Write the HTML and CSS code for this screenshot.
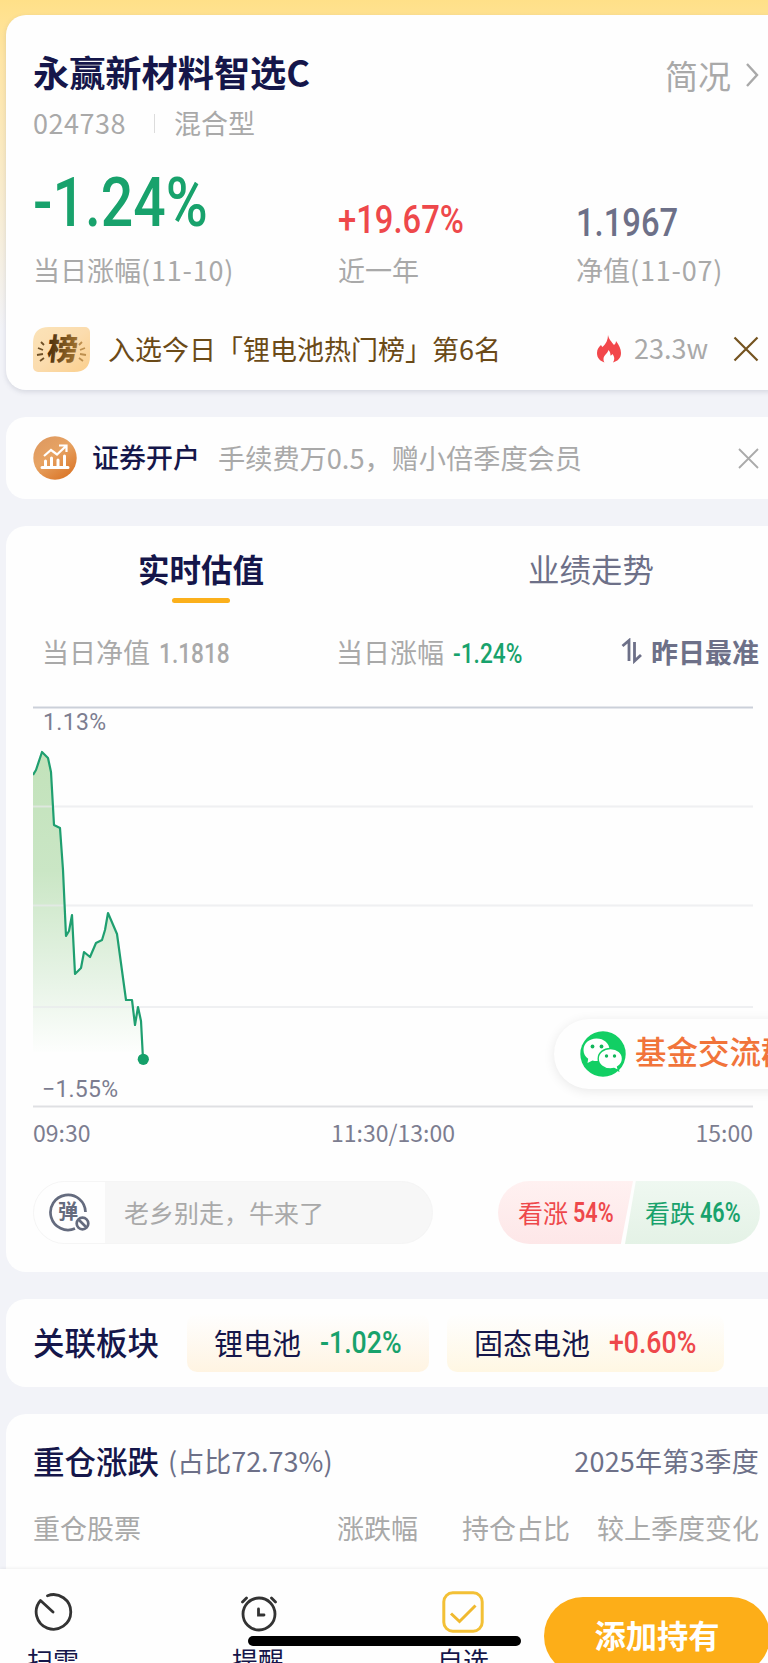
FILE: index.html
```html
<!DOCTYPE html>
<html lang="zh-CN">

<head>
  <meta charset="UTF-8">
  <title>永赢新材料智选C</title>
  <link rel="stylesheet" href="styles.css">
</head>

<body>
  <main class="page">

    <!-- Fund summary -->
    <section class="card summary">
      <div class="title-row">
        <h1>永赢新材料智选C</h1>
        <a class="profile">简况
          <svg width="14" height="26" viewBox="0 0 14 26"><path d="M2 2l10 11L2 24" fill="none" stroke="#a9a9a9" stroke-width="2.4"/></svg>
        </a>
      </div>
      <div class="sub-row">
        <span class="code">024738</span>
        <i class="divider"></i>
        <span>混合型</span>
      </div>
      <div class="metrics">
        <div class="metric">
          <div class="value big green"><span class="din">-1.24%</span></div>
          <div class="label">当日涨幅<span class="date">(11-10)</span></div>
        </div>
        <div class="metric">
          <div class="value mid red"><span class="din">+19.67%</span></div>
          <div class="label">近一年</div>
        </div>
        <div class="metric">
          <div class="value nav slate"><span class="din">1.1967</span></div>
          <div class="label">净值<span class="date">(11-07)</span></div>
        </div>
      </div>
      <div class="rank-row">
        <svg class="rank-badge" width="57" height="45" viewBox="0 0 57 45">
          <defs>
            <linearGradient id="gold" x1="0" y1="0" x2="1" y2="1">
              <stop offset="0" stop-color="#fbe3b8"/>
              <stop offset=".5" stop-color="#fbdcae"/>
              <stop offset="1" stop-color="#fbcf8c"/>
            </linearGradient>
            <linearGradient id="bronze" x1="0" y1="0" x2="1" y2="0">
              <stop offset="0" stop-color="#4a2f0c"/>
              <stop offset="1" stop-color="#a3742f"/>
            </linearGradient>
          </defs>
          <path d="M16 0h36a5 5 0 0 1 5 5v24q0 16-16 16H5a5 5 0 0 1-5-5V16Q0 0 16 0z" fill="url(#gold)"/>
          <text x="14" y="33" class="badge-text" fill="url(#bronze)" transform="skewX(-6) translate(3 0)">榜</text>
          <path d="M8 15l3 3M5 21l5 2M4 28l6-1M7 34l4-3" stroke="#6f5027" stroke-width="1.8"/>
          <path d="M49 15l-3 3M52 21l-5 2M53 28l-6-1M50 34l-4-3" stroke="#bd8f4e" stroke-width="1.8"/>
        </svg>
        <span class="rank-text">入选今日「锂电池热门榜」第6名</span>
        <svg class="flame" width="24" height="28" viewBox="0 0 24 28"><path d="M11 0c1 5 4 7 6 10 1-1 2-2 2-4 3 4 5 8 5 12 0 5-3 8-8 9.500 2-3 1.500-6-.5-8.500-1 1-1.500 1.500-2 1.500 0-2-.5-4-2-5.500-1 4-5 5-5 9 0 1.500.3 2.500 1 3.500C3 26 0 23 0 18c0-4 2-6 4-8 .5 1 1 1.500 1.500 2C9 9 11 5 11 0z" fill="#f2474b"/></svg>
        <span class="heat">23.3w</span>
        <svg class="close" width="26" height="26" viewBox="0 0 26 26"><path d="M1.500 1.500l23 23M24.500 1.500l-23 23" stroke="#74531f" stroke-width="2.200"/></svg>
      </div>
    </section>

    <!-- Account promotion -->
    <section class="card promo">
      <svg width="44" height="44" viewBox="0 0 44 44">
        <defs>
          <linearGradient id="copper" x1="0" y1="0" x2=".7" y2="1">
            <stop offset="0" stop-color="#dc975f"/>
            <stop offset=".5" stop-color="#e7a363"/>
            <stop offset="1" stop-color="#db782b"/>
          </linearGradient>
        </defs>
        <circle cx="22" cy="22" r="21.700" fill="url(#copper)"/>
        <path d="M9 31.500h26M12.500 30v-5M18.500 30v-8M25 30v-6M31.500 30V20" stroke="#fff" stroke-width="3" stroke-linecap="round" fill="none"/>
        <path d="M11 20l7-6 6 4.500 8.500-8M26 9.500h7.500V16" stroke="#fff" stroke-width="2.200" fill="none"/>
      </svg>
      <b>证券开户</b>
      <span class="promo-text">手续费万0.5，赠小倍季度会员</span>
      <svg class="close" width="21" height="21" viewBox="0 0 21 21"><path d="M1 1l19 19M20 1L1 20" stroke="#aaa" stroke-width="1.800"/></svg>
    </section>

    <!-- Live estimate -->
    <section class="card estimate">
      <nav class="tabs">
        <a class="tab active">实时估值</a>
        <a class="tab">业绩走势</a>
      </nav>
      <div class="info-row">
        <div class="info">当日净值<span class="din">1.1818</span></div>
        <div class="info">当日涨幅<span class="din green">-1.24%</span></div>
        <div class="sort">
          <svg width="22" height="26" viewBox="0 0 22 26"><path d="M1.500 8L8 2.500V23M13.500 4v19l6.500-6" fill="none" stroke="#6d7088" stroke-width="2.800"/></svg>
          昨日最准
        </div>
      </div>
      <svg class="chart" width="720" height="404" viewBox="33 705 720 404">
        <defs>
          <linearGradient id="fade" gradientUnits="userSpaceOnUse" x1="0" y1="750" x2="0" y2="1052">
            <stop offset="0" stop-color="#c2e2ba"/>
            <stop offset=".4" stop-color="#cae6c5"/>
            <stop offset=".75" stop-color="#e6f3e5"/>
            <stop offset="1" stop-color="#fdfefd"/>
          </linearGradient>
        </defs>
        <path d="M33 775L36 770L42 752L48 758L51 772L54 825L60 828L63 870L66 936L69 931L72 915L75 974L81 968L84 952L90 957L96 943L102 940L105 930L108 913L117 934L126 1000L132 1000L135 1025L138 1007L141 1021L142 1052H33Z" fill="url(#fade)"/>
        <path d="M33 806.500H753M33 905.500H753M33 1007H753" stroke="#e8eaec" stroke-opacity=".7" stroke-width="2"/>
        <path d="M33 707.500H753" stroke="#cbd0d9" stroke-width="2.200"/>
        <path d="M33 1106.500H753" stroke="#dfe0e3" stroke-width="2"/>
        <path d="M33 775L36 770L42 752L48 758L51 772L54 825L60 828L63 870L66 936L69 931L72 915L75 974L81 968L84 952L90 957L96 943L102 940L105 930L108 913L117 934L126 1000L132 1000L135 1025L138 1007L141 1021L143 1059" fill="none" stroke="#1f9f70" stroke-width="2.200" stroke-linejoin="round"/>
        <circle cx="143.300" cy="1059.300" r="5.600" fill="#15a06a"/>
        <text x="43" y="729.500" class="chart-text" textLength="63">1.13%</text>
        <text x="42" y="1096.500" class="chart-text" textLength="76">−1.55%</text>
      </svg>
      <div class="axis"><span>09:30</span><span>11:30/13:00</span><span>15:00</span></div>
      <div class="vote-row">
        <div class="danmu">
          <div class="danmu-switch">
            <svg width="44" height="42" viewBox="0 0 44 42">
              <path d="M27 36.500A17.500 17.500 0 1 1 37.500 20" fill="none" stroke="#646b7e" stroke-width="2.700"/>
              <text x="20" y="26.500" text-anchor="middle" class="danmu-text">弹</text>
              <circle cx="34.500" cy="31.500" r="5.800" fill="none" stroke="#646b7e" stroke-width="2.700"/>
              <path d="M30.500 27.500l8 8" stroke="#646b7e" stroke-width="2.700"/>
            </svg>
          </div>
          <span>老乡别走，牛来了</span>
        </div>
        <div class="votes">
          <div class="vote up">看涨<span class="din">54%</span></div>
          <div class="vote down">看跌<span class="din">46%</span></div>
        </div>
      </div>
      <div class="wechat">
        <svg width="46" height="46" viewBox="0 0 46 46">
          <circle cx="23" cy="23" r="22.700" fill="#12cf64"/>
          <path d="M16.500 7.500C9 7.500 3.500 12.500 3.500 19c0 3.700 1.700 6.500 4.700 8.700L7.500 32l5-2.500c1.300.4 2.600.5 4 .5 7.500 0 13-5 13-11.300S24 7.500 16.500 7.500z" fill="#fff"/>
          <path d="M30.500 17.500c-7 0-12.300 4.300-12.300 10.200S23.500 38 30.500 38c1.300 0 2.500-.2 3.600-.5l4.400 2.200-.9-3.800c3-2 4.900-4.800 4.900-8.200 0-5.900-5-10.200-12-10.200z" fill="#fff" stroke="#12cf64" stroke-width="1.400"/>
          <g fill="#12b65b"><circle cx="12.500" cy="15.500" r="1.900"/><circle cx="21.500" cy="15.500" r="1.900"/><circle cx="26.500" cy="25" r="1.700"/><circle cx="34.500" cy="25" r="1.700"/></g>
        </svg>
        <span>基金交流群</span>
      </div>
    </section>

    <!-- Related sectors -->
    <section class="card sectors">
      <h2>关联板块</h2>
      <div class="chip">锂电池<span class="din green">-1.02%</span></div>
      <div class="chip wide">固态电池<span class="din red">+0.60%</span></div>
    </section>

    <!-- Top holdings -->
    <section class="card holdings">
      <div class="holdings-head">
        <h2>重仓涨跌</h2>
        <span class="ratio">(占比72.73%)</span>
        <span class="quarter">2025年第3季度</span>
      </div>
      <div class="holdings-cols">
        <span>重仓股票</span>
        <span>涨跌幅</span>
        <span>持仓占比</span>
        <span>较上季度变化</span>
      </div>
    </section>

    <!-- Bottom bar -->
    <footer class="bottom-bar">
      <div class="action">
        <svg width="42" height="42" viewBox="0 0 42 42"><path d="M15.500 4.700A17.300 17.300 0 1 1 8.500 9.500L21 21" fill="none" stroke="#333" stroke-width="2.800" stroke-linecap="round" stroke-linejoin="round"/></svg>
        <span>扫雷</span>
      </div>
      <div class="action">
        <svg width="42" height="42" viewBox="0 0 42 42"><g fill="none" stroke="#333" stroke-width="2.800" stroke-linecap="round"><circle cx="22" cy="23" r="16"/><path d="M21.500 18v6H27M5.500 11l4-4M38.500 11l-4-4"/></g></svg>
        <span>提醒</span>
      </div>
      <div class="action">
        <svg width="42" height="42" viewBox="0 0 42 42"><rect x="1.800" y="1.800" width="38.400" height="38.400" rx="9" fill="none" stroke="#f3c035" stroke-width="3"/><path d="M9 22.500l8.500 8L33.500 14.500" fill="none" stroke="#f0b92f" stroke-width="3"/></svg>
        <span>自选</span>
      </div>
      <button class="add-btn">添加持有</button>
      <div class="home-indicator"></div>
    </footer>
  </main>
</body>

</html>
```
FILE: styles.css
```css
* {
  margin: 0;
  padding: 0;
  box-sizing: border-box;
}

body {
  font-family: "Noto Sans CJK SC", sans-serif;
  font-size: 27px;
  color: #a9a9a9;
  background: #f2f3f8;
}

svg {
  display: block;
  flex-shrink: 0;
}

.page {
  position: relative;
  width: 768px;
  height: 1663px;
  overflow: hidden;
  padding: 15px 0 0 6px;
  display: flex;
  flex-direction: column;
  gap: 27px;
  background: linear-gradient(#ffe088 0, #ffe6a6 60px, #f2f3f8 330px);
}

/* cards run a little past the right edge of the screen */
.card {
  width: 780px;
  flex-shrink: 0;
  background: #fefefe;
  border-radius: 20px;
}

.din {
  display: inline-block;
  font-family: Roboto, "Noto Sans CJK SC", sans-serif;
  font-weight: 500;
  white-space: nowrap;
  transform: scaleX(.84);
  transform-origin: left center;
}

.green {
  color: #18a26c;
}

.red {
  color: #ee484b;
}

.slate {
  color: #6d7088;
}

h1, h2, b {
  color: #15164a;
}

h2 {
  font-size: 31.5px;
  font-weight: 500;
}

.close {
  margin-left: auto;
}

/* fund summary */
.summary {
  height: 375px;
  padding: 29px 27px 0 27px;
  box-shadow: 0 2px 5px rgba(90, 95, 120, .18);
}

.title-row {
  display: flex;
  justify-content: space-between;
  height: 55px;
  line-height: 54px;
}

h1 {
  font-size: 36.2px;
  font-weight: 700;
}

.profile {
  display: flex;
  align-items: center;
  gap: 14px;
  padding-top: 6px;
  font-size: 33px;
}

.sub-row {
  display: flex;
  align-items: center;
  height: 50px;
  padding-bottom: 4px;
}

.code {
  letter-spacing: .5px;
}

.divider {
  width: 1px;
  height: 19px;
  margin: 3px 19px 0 28px;
  background: #dcdcdc;
}

.metrics {
  display: grid;
  grid-template-columns: 305px 238px 1fr;
}

.value {
  height: 101px;
  display: flex;
  align-items: center;
}

.big {
  font-size: 68px;
  padding-top: 7px;
}

.mid {
  font-size: 39px;
  padding-top: 41px;
}

.nav {
  font-size: 39px;
  padding-top: 46px;
}

.label {
  height: 42px;
  line-height: 40px;
}

.date {
  letter-spacing: .8px;
}

.rank-row {
  display: flex;
  align-items: center;
  height: 56px;
  margin-top: 29px;
}

.badge-text {
  font-size: 30px;
  font-weight: 900;
}

.rank-text {
  margin: 0 0 2px 18px;
  color: #6b4a17;
}

.flame {
  margin-left: 96px;
}

.heat {
  margin: 0 0 4px 13px;
}

/* promotion */
.promo {
  display: flex;
  align-items: center;
  height: 82px;
  padding: 0 27px 0 27px;
}

.promo b {
  font-weight: 500;
  margin: 0 18px 3px 15px;
}

.promo-text {
  margin-bottom: 3px;
  font-size: 27.2px;
}

/* estimate */
.estimate {
  position: relative;
  height: 746px;
}

.tabs {
  display: flex;
  height: 86px;
}

.tab {
  position: relative;
  flex: 1;
  text-align: center;
  line-height: 84px;
  font-size: 31.5px;
  color: #6d7088;
}

.tab.active {
  color: #15164a;
  font-weight: 700;
}

.tab.active::after {
  content: "";
  position: absolute;
  left: 166px;
  bottom: 9px;
  width: 58px;
  height: 5px;
  border-radius: 3px;
  background: #fbb01c;
}

.info-row {
  display: grid;
  grid-template-columns: 294px 1fr auto;
  align-items: center;
  height: 82px;
  padding: 0 27px 4px 36px;
}

.info {
  white-space: nowrap;
}

.info .din {
  margin-left: 9px;
}

.sort {
  display: flex;
  align-items: center;
  gap: 8px;
  color: #6d7088;
  font-weight: 700;
}

.chart {
  margin: 11px 0 0 27px;
}

.chart-text {
  font-family: Roboto, "Noto Sans CJK SC", sans-serif;
  font-size: 23px;
  fill: #7c7d90;
}

.axis {
  display: flex;
  justify-content: space-between;
  width: 720px;
  margin-left: 27px;
  height: 48px;
  line-height: 46px;
  font-size: 23px;
  color: #7c7d90;
}

.vote-row {
  display: flex;
  justify-content: space-between;
  width: 727px;
  height: 63px;
  margin: 24px 0 0 27px;
  font-size: 25px;
}

.danmu {
  display: flex;
  align-items: center;
  width: 400px;
  border-radius: 32px;
  background: #f7f7f7;
  overflow: hidden;
  border: 1px solid #f5f5f5;
}

.danmu span {
  margin-bottom: 2px;
}

.danmu-switch {
  display: flex;
  align-items: center;
  width: 71px;
  height: 61px;
  margin-right: 19px;
  padding-left: 14px;
  background: #fefefe;
}

.danmu-text {
  font-size: 20px;
  font-weight: 700;
  fill: #646b7e;
}

.votes {
  display: flex;
  width: 262px;
}

.vote {
  display: flex;
  align-items: center;
  gap: 5px;
  padding-bottom: 2px;
  white-space: nowrap;
}

.vote .din {
  font-size: 27px;
  font-weight: 600;
  padding-top: 2px;
  transform: scaleX(.8);
}

.up {
  width: 135px;
  padding-left: 20px;
  color: #ee484b;
  background: linear-gradient(#fff1f1, #fde7e8);
  border-radius: 32px 0 0 32px;
  clip-path: polygon(0 0, 100% 0, 91% 100%, 0 100%);
}

.down {
  width: 135px;
  margin-left: -8px;
  padding-left: 20px;
  color: #18a26c;
  background: linear-gradient(#eff8f1, #e4f2e6);
  border-radius: 0 32px 32px 0;
  clip-path: polygon(8% 0, 100% 0, 100% 100%, 0 100%);
}

/* floating group entry */
.wechat {
  position: absolute;
  left: 548px;
  top: 493px;
  display: flex;
  align-items: center;
  gap: 9px;
  width: 240px;
  height: 70px;
  padding-left: 26px;
  border-radius: 35px 0 0 35px;
  background: #fefefe;
  box-shadow: 0 2px 12px rgba(0, 0, 0, .09);
  color: #f1743a;
  font-size: 31.5px;
  font-weight: 500;
  white-space: nowrap;
}

.wechat span {
  margin-bottom: 8px;
}

/* sectors */
.sectors {
  display: flex;
  align-items: center;
  height: 88px;
  padding-left: 27px;
}

.sectors h2 {
  margin-bottom: 5px;
}

.chip {
  display: flex;
  align-items: center;
  gap: 19px;
  width: 242px;
  height: 58px;
  margin-left: 28px;
  padding: 0 0 2px 27px;
  border-radius: 10px;
  background: linear-gradient(#fefefe, #fff4e2);
  color: #15164a;
  font-size: 29px;
  white-space: nowrap;
}

.chip .din {
  font-size: 31px;
  transform: scaleX(.86);
}

.chip.wide {
  width: 277px;
  margin-left: 18px;
  background: linear-gradient(#fefefe, #fff7e3);
}

/* holdings */
.holdings {
  height: 200px;
  padding: 20px 27px 0 27px;
}

.holdings-head {
  display: flex;
  align-items: center;
  height: 52px;
  color: #6d7088;
}

.ratio {
  margin-left: 9px;
}

.quarter {
  margin-left: auto;
  letter-spacing: .2px;
}

.holdings-cols {
  display: grid;
  grid-template-columns: 304px 125px 135px 1fr;
  height: 84px;
  line-height: 84px;
  white-space: nowrap;
}

/* bottom bar */
.bottom-bar {
  position: absolute;
  left: 0;
  top: 1569px;
  width: 780px;
  height: 120px;
  display: flex;
  background: #fefefe;
  box-shadow: 0 -1px 3px rgba(0, 0, 0, .06);
}

.action {
  width: 205px;
  padding: 22px 0 0 27px;
  display: flex;
  flex-direction: column;
  color: #15164a;
  font-size: 26px;
  line-height: 36px;
}

.action svg {
  margin: 0 0 9px 5px;
}

.add-btn {
  position: absolute;
  left: 544px;
  top: 28px;
  width: 226px;
  height: 78px;
  padding-bottom: 4px;
  border: none;
  border-radius: 39px;
  background: #fdae18;
  color: #fff;
  font-family: inherit;
  font-size: 31.3px;
  font-weight: 700;
}

.home-indicator {
  position: absolute;
  left: 248px;
  top: 67px;
  width: 273px;
  height: 10px;
  border-radius: 5px;
  background: #000;
}
```
